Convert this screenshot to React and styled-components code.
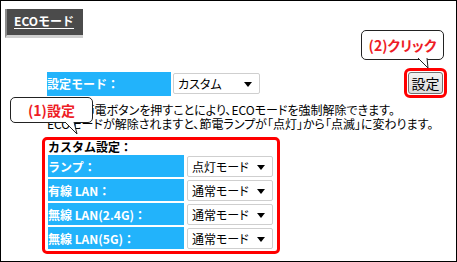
import React from "react";
import styled, { createGlobalStyle } from "styled-components";

const GlobalStyle = createGlobalStyle`
  html, body {
    margin: 0;
    padding: 0;
    background: #ffffff;
  }
  body {
    font-family: "Noto Sans CJK JP", "DejaVu Sans", sans-serif;
    font-size: 12px;
    color: #000000;
  }
`;

const Frame = styled.div`
  position: relative;
  box-sizing: border-box;
  width: 457px;
  height: 262px;
  border: 1px solid #000000;
  overflow: hidden;
`;

const TitleBar = styled.div`
  box-sizing: border-box;
  margin: 8px 0 0 4px;
  width: 78px;
  height: 29px;
  padding: 0 0 3px 7px;
  display: flex;
  align-items: center;
  background: #4b4b4b;
  border-left: 2px solid #8a8a8a;
  border-bottom: 3px solid #cfcfcf;
`;

const TitleText = styled.span`
  color: #ffffff;
  font-weight: bold;
  font-size: 12px;
  line-height: 1;
  text-decoration: underline;
  text-underline-offset: 2px;
`;

const ModeRow = styled.div`
  display: flex;
  align-items: center;
  margin: 31px 0 0 46px;
  padding-right: 9px;
`;

const Label = styled.div`
  box-sizing: border-box;
  width: ${p => p.$w}px;
  height: ${p => p.$h}px;
  display: flex;
  align-items: center;
  background: #22b3fb;
  color: #ffffff;
  font-weight: bold;
  font-size: 12px;
  white-space: pre;
`;

const Select = styled.div`
  box-sizing: border-box;
  position: relative;
  margin-left: ${p => p.$gap}px;
  width: ${p => p.$w}px;
  height: 21px;
  padding-left: 4px;
  display: flex;
  align-items: center;
  background: #ffffff;
  border: 1px solid #cfcfcf;
  border-radius: 2px;
  font-size: 12px;
  font-feature-settings: "palt";
`;

const Arrow = styled.span`
  position: absolute;
  right: 7px;
  top: 8px;
  width: 0;
  height: 0;
  border-left: 4px solid transparent;
  border-right: 4px solid transparent;
  border-top: 5px solid #000000;
`;

const ButtonRing = styled.div`
  box-sizing: border-box;
  margin-left: auto;
  margin-top: -1px;
  width: 43px;
  height: 30px;
  padding: 1px;
  border: 3px solid #ff0000;
  border-radius: 6px;
  display: flex;
`;

const Button = styled.button`
  flex: 1;
  margin: 0;
  padding: 0;
  border: 1px solid #707070;
  border-radius: 3px;
  background: linear-gradient(#f2f2f2, #dcdcdc);
  font-family: "Noto Sans CJK JP", sans-serif;
  font-size: 14px;
  color: #000000;
  line-height: 1;
`;

const Desc = styled.div`
  margin: 5px 0 0 46px;
  font-size: 12px;
  line-height: 14px;
  font-feature-settings: "palt";
  white-space: nowrap;
`;

const CustomBox = styled.div`
  box-sizing: border-box;
  margin: 6px 0 0 41px;
  width: 238px;
  height: 117px;
  padding: 0 0 0 3px;
  border: 3px solid #ff0000;
  border-radius: 5px;
`;

const CustomTitle = styled.div`
  height: 15px;
  font-weight: bold;
  font-size: 12px;
  line-height: 13px;
`;

const Rows = styled.div`
  display: flex;
  flex-direction: column;
  gap: 2px;
`;

const Row = styled.div`
  display: flex;
  align-items: center;
`;

const Callout = styled.div`
  position: absolute;
  box-sizing: border-box;
  left: ${p => p.$x}px;
  top: ${p => p.$y}px;
  width: ${p => p.$w}px;
  height: ${p => p.$h}px;
  display: flex;
  align-items: center;
  justify-content: center;
  background: #ffffff;
  border: 1px solid #222222;
  border-radius: 5px;
  color: #ee1c25;
  font-weight: bold;
  font-size: 14px;
  font-feature-settings: "palt";
  z-index: 2;
`;

const Tail = styled.svg`
  position: absolute;
  left: ${p => p.$x}px;
  top: ${p => p.$y}px;
  overflow: visible;
  z-index: 3;
`;

const rows = [
  { label: "ランプ：", value: "点灯モード" },
  { label: "有線 LAN：", value: "通常モード" },
  { label: "無線 LAN(2.4G)：", value: "通常モード" },
  { label: "無線 LAN(5G)：", value: "通常モード" },
];

export default function App() {
  return (
    <>
      <GlobalStyle />
      <Frame>
        <TitleBar>
          <TitleText>ECOモード</TitleText>
        </TitleBar>

        <ModeRow>
          <Label $w={124} $h={24}>設定モード：</Label>
          <Select $gap={2} $w={87}>
            カスタム
            <Arrow />
          </Select>
          <ButtonRing>
            <Button>設定</Button>
          </ButtonRing>
        </ModeRow>

        <Desc>
          本体の節電ボタンを押すことにより、ECOモードを強制解除できます。
          <br />
          ECOモードが解除されますと、節電ランプが「点灯」から「点滅」に変わります。
        </Desc>

        <CustomBox>
          <CustomTitle>カスタム設定：</CustomTitle>
          <Rows>
            {rows.map(r => (
              <Row key={r.label}>
                <Label $w={136} $h={22}>{r.label}</Label>
                <Select $gap={3} $w={86}>
                  {r.value}
                  <Arrow />
                </Select>
              </Row>
            ))}
          </Rows>
        </CustomBox>

        <Callout $x={360} $y={29} $w={83} $h={30}>(2)クリック</Callout>
        <Tail $x={416} $y={57} width="14" height="12">
          <polygon points="1,0 11,10 10,0" fill="#ffffff" />
          <polyline points="1,0 11,10 10,0" fill="none" stroke="#222222" strokeWidth="1" />
        </Tail>

        <Callout $x={9} $y={96} $w={83} $h={26}>(1)設定</Callout>
        <Tail $x={63} $y={121} width="14" height="14">
          <polygon points="1,0 13,12 10,0" fill="#ffffff" />
          <polyline points="1,0 13,12 10,0" fill="none" stroke="#222222" strokeWidth="1" />
        </Tail>
      </Frame>
    </>
  );
}
